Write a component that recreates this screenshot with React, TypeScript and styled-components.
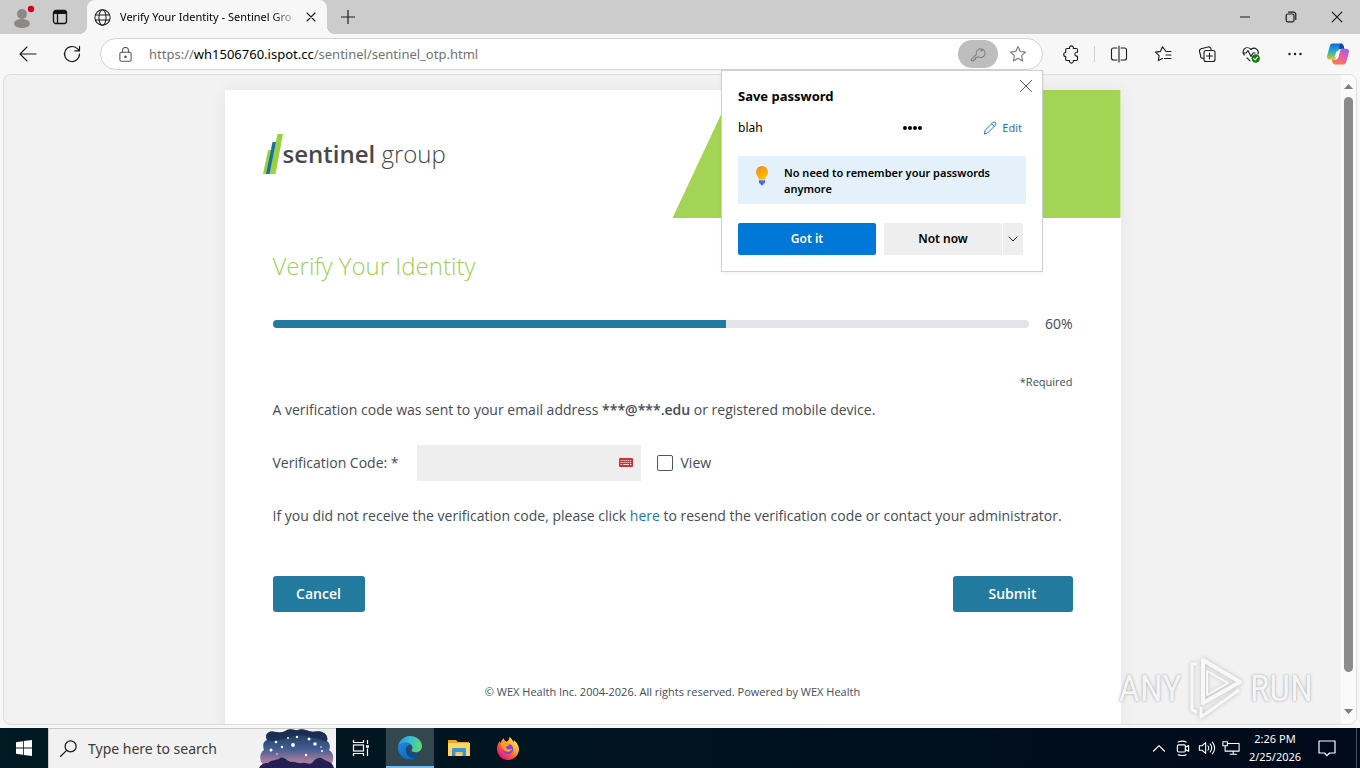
import React, { useState } from 'react';
import styled, { createGlobalStyle } from 'styled-components';

const ui = '"Noto Sans", "Open Sans", sans-serif';
const web = '"Open Sans", "Noto Sans", sans-serif';

const GlobalStyle = createGlobalStyle`
  *, *::before, *::after { box-sizing: border-box; }
  html, body, #root { height: 100%; }
  body { margin: 0; overflow: hidden; background: #f7f7f7; font-family: ${ui}; color: #000; }
  button, input { font: inherit; }
  button { border: 0; padding: 0; background: none; color: inherit; cursor: pointer; }
  p, h1, h2 { margin: 0; font-weight: 400; }
  svg { display: block; flex: none; }
`;

const Desktop = styled.div`
  display: flex;
  flex-direction: column;
  height: 100vh;
`;

/* ---------- browser chrome ---------- */

const TabStrip = styled.header`
  display: flex;
  height: 34px;
  background: #cccccc;
`;

const StripButton = styled.button<{ $width: number }>`
  display: flex;
  align-items: center;
  justify-content: center;
  width: ${(p) => p.$width}px;
  height: 34px;
`;

const Profile = styled(StripButton)`
  padding-left: 4px;
`;

const Tab = styled.div`
  position: relative;
  display: flex;
  align-items: center;
  width: 240px;
  margin-left: 9px;
  padding: 0 8px 0 7px;
  border-radius: 8px 8px 0 0;
  background: #f7f7f7;
  &::before, &::after {
    content: '';
    position: absolute;
    bottom: 0;
    width: 8px;
    height: 8px;
  }
  &::before { left: -8px; background: radial-gradient(circle at 0 0, transparent 8px, #f7f7f7 8px); }
  &::after { right: -8px; background: radial-gradient(circle at 100% 0, transparent 8px, #f7f7f7 8px); }
`;

const TabTitle = styled.span`
  flex: 1;
  min-width: 0;
  margin-left: 9px;
  overflow: hidden;
  white-space: nowrap;
  font-size: 11px;
  line-height: 20px;
  mask-image: linear-gradient(to right, #000 152px, transparent 180px);
`;

const TabClose = styled.button`
  display: flex;
  align-items: center;
  justify-content: center;
  width: 16px;
  height: 24px;
`;

const WindowControls = styled.div`
  display: flex;
  margin-left: auto;
`;

const Toolbar = styled.nav`
  display: flex;
  align-items: center;
  height: 40px;
  padding-left: 6px;
`;

const ToolButton = styled.button`
  display: flex;
  align-items: center;
  justify-content: center;
  width: 44px;
  height: 32px;
`;

const ToolDivider = styled.span`
  width: 1px;
  height: 16px;
  margin: 0 1px;
  background: #cfcfcf;
`;

const AddressBar = styled.div`
  position: relative;
  display: flex;
  flex: 1;
  align-items: center;
  height: 32px;
  margin: 0 6px;
  padding: 0 10px 0 17px;
  border: 1px solid #d2d2d2;
  border-radius: 16px;
  background: #fff;
`;

const Url = styled.a`
  flex: 1;
  margin-left: 16px;
  font-size: 13px;
  line-height: 20px;
  color: #727272;
  text-decoration: none;
  b { font-weight: 400; color: #000; }
`;

const AddressAction = styled.button<{ $active?: boolean }>`
  display: flex;
  align-items: center;
  justify-content: center;
  width: 40px;
  height: 28px;
  border-radius: 14px;
  background: ${(p) => (p.$active ? '#bebebe' : 'transparent')};
  &:last-of-type { width: 28px; margin-left: 6px; }
`;

/* ---------- save-password flyout ---------- */

const Flyout = styled.section`
  position: absolute;
  z-index: 5;
  top: 31px;
  right: -1px;
  width: 322px;
  padding: 15px 16px 16px;
  border: 1px solid #cfcfcf;
  background: #fff;
  box-shadow: 0 2px 4px rgba(0, 0, 0, 0.04);
  font-size: 12px;
  line-height: 16px;
`;

const FlyoutClose = styled.button`
  position: absolute;
  top: 7px;
  right: 8px;
  display: flex;
  align-items: center;
  justify-content: center;
  width: 16px;
  height: 16px;
`;

const FlyoutTitle = styled.h2`
  font-size: 13px;
  line-height: 20px;
  font-weight: 700;
`;

const Credentials = styled.div`
  display: grid;
  grid-template-columns: 165px 1fr auto;
  align-items: center;
  height: 20px;
  margin-top: 12px;
  padding-right: 4px;
`;

const Dots = styled.span`
  display: flex;
  gap: 1px;
  i { width: 4px; height: 4px; border-radius: 50%; background: #000; }
`;

const EditButton = styled.button`
  display: flex;
  align-items: center;
  gap: 5px;
  font-size: 11px;
  color: #1c76c4;
`;

const Tip = styled.div`
  display: flex;
  align-items: flex-start;
  gap: 14px;
  height: 48px;
  margin-top: 18px;
  padding: 9px 8px 0 16px;
  border-radius: 2px;
  background: #e4f1fb;
  font-size: 11px;
  font-weight: 600;
`;

const FlyoutActions = styled.div`
  display: flex;
  margin: 19px 0 0;
`;

const FlyoutButton = styled.button<{ $width: number; $primary?: boolean }>`
  display: flex;
  align-items: center;
  justify-content: center;
  width: ${(p) => p.$width}px;
  height: 32px;
  margin-right: ${(p) => (p.$primary ? 8 : 1)}px;
  border-radius: 2px;
  background: ${(p) => (p.$primary ? '#0078d7' : '#eeeeee')};
  color: ${(p) => (p.$primary ? '#fff' : '#000')};
  font-weight: 600;
`;

/* ---------- web page ---------- */

const Viewport = styled.div`
  position: relative;
  display: flex;
  flex: 1;
  min-height: 0;
  margin: 0 3px 3px;
  overflow: hidden;
  border: 1px solid #dedede;
  border-radius: 8px;
  background: #f2f2f2;
`;

const PageArea = styled.main`
  flex: 1;
  padding-top: 15px;
  overflow: hidden;
  font-family: ${web};
  font-size: 14px;
  line-height: 24px;
  color: #454b57;
  b { font-weight: 600; }
`;

const Card = styled.article`
  max-width: 896px;
  min-height: 700px;
  margin: 0 auto;
  background: #fff;
  box-shadow: 0 0 16px rgba(0, 0, 0, 0.06);
`;

const Masthead = styled.div`
  display: flex;
  justify-content: space-between;
  height: 128px;
  padding-left: 38px;
`;

const Slant = styled.div`
  width: 448px;
  background: #a4d455;
  clip-path: polygon(60px 0, 100% 0, 100% 100%, 0 100%);
`;

const Brand = styled.a`
  display: flex;
  height: 128px;
  align-items: center;
  color: #48484a;
  text-decoration: none;
  font-size: 24px;
  line-height: 32px;
  font-weight: 300;
`;

const Content = styled.form`
  display: flex;
  flex-direction: column;
  padding: 32px 48px;
`;

const Title = styled.h1`
  font-size: 24px;
  line-height: 32px;
  font-weight: 300;
  color: #a0cd57;
`;

const ProgressRow = styled.div`
  display: flex;
  align-items: center;
  gap: 16px;
  height: 20px;
  margin-top: 32px;
`;

const Track = styled.div`
  flex: 1;
  height: 8px;
  overflow: hidden;
  border-radius: 4px;
  background: #e3e3e8;
`;

const Fill = styled.div`
  height: 8px;
  background: #227a9e;
`;

const Small = styled.p<{ $center?: boolean }>`
  margin-top: ${(p) => (p.$center ? 72 : 40)}px;
  font-size: 11px;
  line-height: 16px;
  text-align: ${(p) => (p.$center ? 'center' : 'right')};
`;

const Lead = styled.p`
  margin-top: 8px;
`;

const Paragraph = styled.p`
  margin-top: 23px;
  a { color: #227a9e; text-decoration: none; }
`;

const Field = styled.div`
  display: flex;
  align-items: center;
  height: 36px;
  margin-top: 23px;
`;

const FieldLabel = styled.label`
  width: 144px;
`;

const CodeBox = styled.div`
  display: flex;
  align-items: center;
  width: 224px;
  height: 36px;
  margin-right: 16px;
  padding-right: 8px;
  background: #eeeeee;
`;

const CodeInput = styled.input`
  flex: 1;
  min-width: 0;
  height: 36px;
  padding: 0 12px;
  border: 0;
  outline: 0;
  background: transparent;
`;

const Check = styled.input`
  appearance: none;
  width: 16px;
  height: 16px;
  margin: 0 8px 0 0;
  border: 1px solid #4f5560;
  border-radius: 2px;
  background: #fff;
  &:checked { background: #227a9e; }
`;

const Actions = styled.div`
  display: flex;
  justify-content: space-between;
  margin-top: 48px;
`;

const ActionButton = styled.button<{ $width: number }>`
  width: ${(p) => p.$width}px;
  height: 36px;
  border-radius: 3px;
  background: #227a9e;
  color: #fff;
  font-weight: 600;
`;

const Scrollbar = styled.div`
  display: flex;
  flex-direction: column;
  align-items: center;
  justify-content: space-between;
  width: 15px;
  padding: 9px 0 10px;
  background: #fafafa;
`;

const Thumb = styled.div`
  flex: 1;
  width: 9px;
  margin: 8px 0 37px;
  border-radius: 5px;
  background: #8b8b8b;
`;

const Watermark = styled.div`
  position: absolute;
  right: 43px;
  bottom: 2px;
  display: flex;
  align-items: center;
  gap: 6px;
  height: 68px;
  font-family: "Roboto Condensed", "Open Sans Condensed", Roboto, sans-serif;
  font-size: 37px;
  color: #f5f5f5;
  text-shadow: 0 0 3px #b0b0b0, 0 0 1px #b0b0b0;
  svg { filter: drop-shadow(0 0 2px #bbbbbb); }
`;

/* ---------- taskbar ---------- */

const Taskbar = styled.footer`
  display: flex;
  align-items: center;
  height: 40px;
  background: linear-gradient(90deg, #001a24, #00131f 50%, #000a1a);
  color: #fff;
`;

const TaskButton = styled.button<{ $active?: boolean }>`
  display: flex;
  align-items: center;
  justify-content: center;
  width: 48px;
  height: 40px;
  background: ${(p) => (p.$active ? '#33474f' : 'transparent')};
  box-shadow: ${(p) => (p.$active ? 'inset 0 -2px #76b9ed' : 'none')};
`;

const PinnedApps = styled.div`
  display: flex;
  gap: 1px;
  padding-left: 1px;
`;

const SearchBox = styled.label`
  display: flex;
  align-items: center;
  width: 288px;
  height: 40px;
  padding: 0 1px 0 11px;
  border: 1px solid #c9c9c9;
  border-width: 1px 0 0 1px;
  background: #f1f1f1;
`;

const SearchInput = styled.input`
  flex: 1;
  min-width: 0;
  padding: 0;
  margin-left: 11px;
  border: 0;
  outline: 0;
  background: transparent;
  font-size: 14px;
  &::placeholder { color: #3b3b3b; opacity: 1; }
`;

const Tray = styled.div`
  display: flex;
  align-items: center;
  height: 40px;
  margin-left: auto;
`;

const TrayButton = styled.button`
  display: flex;
  align-items: center;
  justify-content: center;
  width: 24px;
  height: 40px;
`;

const Clock = styled.time`
  width: 64px;
  text-align: center;
  font-size: 11px;
  line-height: 18px;
`;

const Notifications = styled(TrayButton)`
  width: 40px;
`;

const ShowDesktop = styled.button`
  width: 4px;
  height: 40px;
  margin-left: 9px;
  border-left: 1px solid #4a5058;
`;

/* ---------- icons ---------- */

type IconProps = { size?: number; color?: string; width?: number; children: React.ReactNode };
const Icon = ({ size = 20, color = '#1b1b1b', width = 1.1, children }: IconProps) => (
  <svg width={size} height={size} viewBox="0 0 20 20" fill="none" stroke={color} strokeWidth={width} strokeLinecap="round" strokeLinejoin="round" aria-hidden="true">
    {children}
  </svg>
);

const Cross = ({ size, color, width }: { size: number; color?: string; width?: number }) => (
  <Icon size={size} color={color} width={width}><path d="M2 2 18 18M18 2 2 18" /></Icon>
);

const starPath = 'M10 2.6l2.2 4.9 5.3.6-3.9 3.600 1 5.200L10 14.300l-4.600 2.600 1-5.200L2.500 8.100l5.300-.6z';

const ProfileIcon = () => (
  <svg width="24" height="26" viewBox="0 0 24 26">
    <circle cx="11" cy="10" r="5" fill="#8b8885" />
    <ellipse cx="11" cy="19.500" rx="8" ry="4.500" fill="#8b8885" />
    <circle cx="20" cy="5" r="3.200" fill="#d0021b" />
  </svg>
);

const CopilotIcon = () => (
  <svg width="24" height="24" viewBox="0 0 24 24">
    <defs>
      <linearGradient id="cpA" x1="0" y1="0" x2="0" y2="1">
        <stop offset="0" stopColor="#1468d8" /><stop offset=".45" stopColor="#1fa8d8" />
        <stop offset=".7" stopColor="#63c46e" /><stop offset="1" stopColor="#f5c42c" />
      </linearGradient>
      <linearGradient id="cpB" x1=".8" y1="0" x2=".2" y2="1">
        <stop offset="0" stopColor="#a45bf0" /><stop offset=".5" stopColor="#ec5f9c" /><stop offset="1" stopColor="#f9803c" />
      </linearGradient>
    </defs>
    <path d="M6.500 1.500h8.300c1.500 0 2.300 1 2.800 2.500l.7 2.700h-3.500c-1.800 0-2.600 1-3.100 2.700L10 15.500c-.4 1.400-1.200 2.300-2.700 2.300H4C1.500 17.800.5 15.800 1.200 13.500L3.800 4C4.300 2.400 5.100 1.500 6.500 1.500z" fill="url(#cpA)" />
    <path d="M17.500 22.500H9.200c-1.500 0-2.300-1-2.800-2.500l-.5-2.200h3.300c1.800 0 2.600-1 3.100-2.700L14 9c.4-1.400 1.200-2.300 2.700-2.300H20c2.500 0 3.500 2 2.800 4.300L20.200 20c-.5 1.600-1.300 2.500-2.700 2.500z" fill="url(#cpB)" />
    <path d="M14.800 1.500c1.500 0 2.300 1 2.800 2.500l.7 2.700h-3.500c-1 0-1.700.3-2.200.9l1.200-4.100c.3-1.200.5-2 1-2z" fill="#183fa8" />
    <path d="M10.300 9.500h3.500l-1.500 5.700h-3.700z" fill="#fff" />
  </svg>
);

const BulbIcon = () => (
  <svg width="16" height="22" viewBox="0 0 16 22">
    <defs><linearGradient id="bulb" x1="0" y1="0" x2=".6" y2="1"><stop offset="0" stopColor="#f58220" /><stop offset="1" stopColor="#ffc400" /></linearGradient></defs>
    <path d="M8 1a6 6 0 0 0-6 6.200c0 2.300 1.500 3.700 2.300 5.300.3.700.4 1.500.4 2h6.600c0-.5.100-1.300.4-2 .8-1.600 2.300-3 2.300-5.300A6 6 0 0 0 8 1z" fill="url(#bulb)" />
    <path d="M4.900 15.300h6.200v1.800c0 .8-.5 1.400-1.300 1.600L8.700 20.300H7.300L6.200 18.700c-.8-.2-1.300-.8-1.300-1.600z" fill="#4f6bed" />
  </svg>
);

const BrandMark = () => (
  <svg width="20" height="40" viewBox="0 0 20 40">
    <path d="M14.500 0H20L12.500 40H6z" fill="#97d33f" />
    <path d="M5 16h5L5 40H0z" fill="#97d33f" />
    <path d="M9.500 8H13L6.500 40H3z" fill="#1f6fa0" />
  </svg>
);

const KeyboardIcon = () => (
  <svg width="14" height="10" viewBox="0 0 14 10">
    <rect width="14" height="9" rx="1" fill="#cf2f38" />
    <path d="M1.500 2.500h11M1.500 4.500h11" stroke="#f6d4d6" strokeWidth="1" strokeDasharray="1.200 .7" />
    <path d="M1.500 6.500h1.500M4 6.500h6M11 6.500h1.500" stroke="#f6d4d6" />
  </svg>
);

const PlayMark = () => (
  <svg width="56" height="64" viewBox="0 0 56 64" fill="none" strokeLinejoin="round" stroke="#f8f8f8" strokeWidth="4">
    <path d="M15 4v43L52 26z" />
    <path d="M9 8H4v46l5 2M13 51v10l38-27" strokeWidth="3" />
    <path d="M19 15v24l21-12z" strokeWidth="2" />
  </svg>
);

const NightSky = () => (
  <svg width="76" height="39" viewBox="0 0 76 39">
    <defs>
      <linearGradient id="sky" x1="0" y1="0" x2="0" y2="1">
        <stop offset="0" stopColor="#1c3157" /><stop offset=".5" stopColor="#3f5d90" /><stop offset=".8" stopColor="#a07a9c" /><stop offset="1" stopColor="#c98a98" />
      </linearGradient>
    </defs>
    <path d="M3 34C0 30 1 23 5 21 3 15 5 12 8 11 5 5 10 1 17 3c5 1 8 0 11-2 5-2 8 1 11 0 4-2 8 0 11 1 5 2 8-1 13 1 5 2 6 6 5 9 4 3 3 7 2 9 5 3 5 9 3 13l-4 5H6z" fill="url(#sky)" />
    <path d="M8 11C5 5 10 1 17 3c5 1 8 0 11-2 5-2 8 1 11 0 4-2 8 0 11 1 5 2 8-1 13 1 5 2 6 6 5 9-4 1-7-3-12-3-7 0-9-3-16-3s-9 4-15 4-9 4-16 1z" fill="#182a4c" opacity=".75" />
    <path d="M0 39c2-4 5-5 9-5 4-4 9-2 12-5 4-2 7 3 11 4 4-1 7 2 11 1 4-1 7 2 10 0 3-4 7-7 11-4 4 3 9 2 11 9z" fill="#241f52" />
    <g fill="#fff">
      <circle cx="17" cy="13" r="1.300" /><circle cx="34" cy="16" r="1.900" /><circle cx="38" cy="8" r="1.200" /><circle cx="50" cy="10" r="1.500" />
      <circle cx="56" cy="15" r="1.800" /><circle cx="23" cy="18" r="1.200" /><circle cx="12" cy="21" r="1.500" /><circle cx="63" cy="22" r="1" />
      <circle cx="47" cy="26" r="1.200" /><circle cx="29" cy="9" r=".9" /><circle cx="18" cy="25" r=".8" /><circle cx="62" cy="18" r=".8" />
    </g>
  </svg>
);

const EdgeIcon = () => (
  <svg width="26" height="26" viewBox="0 0 26 26">
    <defs>
      <linearGradient id="egTop" x1="0" y1=".4" x2="1" y2=".5"><stop offset="0" stopColor="#2596e0" /><stop offset=".5" stopColor="#35c1d6" /><stop offset="1" stopColor="#5fdb67" /></linearGradient>
      <linearGradient id="egLow" x1="0" y1="0" x2="1" y2="1"><stop offset="0" stopColor="#1b8de0" /><stop offset="1" stopColor="#0f5bb0" /></linearGradient>
    </defs>
    <path d="M1 13C1 6 6.500 1 13 1s12 4.500 12 10c0 4-3 6.300-6.300 6.300-2.700 0-4.200-.9-4.200-1.700 0-.6 1-1 1-2.900C15.500 10 12.500 7.800 9 7.800 4.500 7.800 1.600 10.300 1 13z" fill="url(#egTop)" />
    <path d="M1 13c.6-2.700 3.500-5.200 8-5.200 2 0 3.700.6 4.900 1.700-3.200.3-5 2.600-5 5.400 0 5 4.500 8.900 9.700 8.300A12 12 0 0 1 1 13z" fill="url(#egLow)" />
    <path d="M10.600 11.200c-1.200 1-1.700 2.300-1.700 3.700 0 5 4.900 9 10 8 2-1 3.500-2.500 4.400-4.100.3-.6-.2-1-.8-.7-5.500 2.800-11.900-.6-11.900-6.900z" fill="#114a8b" />
  </svg>
);

const FolderIcon = () => (
  <svg width="24" height="22" viewBox="0 0 24 22">
    <path d="M1 3h8l2 2h11v3H1z" fill="#e8a921" />
    <path d="M1 6h22v13H1z" fill="#fcd768" />
    <path d="M5 19v-6.500c0-1 .6-1.500 1.500-1.500h11c.9 0 1.500.5 1.500 1.500V19h-3.500v-4h-7v4z" fill="#3d93d3" />
    <path d="M9 15h6v2H9z" fill="#e8c860" />
  </svg>
);

const FirefoxIcon = () => (
  <svg width="24" height="24" viewBox="0 0 24 24">
    <defs>
      <linearGradient id="ffx" x1=".9" y1=".1" x2=".2" y2=".9"><stop offset="0" stopColor="#fff04a" /><stop offset=".35" stopColor="#ffb02e" /><stop offset=".65" stopColor="#ff5a3c" /><stop offset="1" stopColor="#e31587" /></linearGradient>
    </defs>
    <path d="M13.500.8c2 1.700 3.200 3.500 4 5.500.4-.5.300-1.300 0-2.300 3 2 5.500 5.500 5.500 9.300A11 11 0 0 1 1 12.800C1 9.500 2.300 6.700 4 5c0 1 .2 1.700.5 2.200C5.300 4.800 6.400 3.300 7.700 2.300c.2 1.500 1.300 2.600 2.800 3.500C12.500 5 13.600 3 13.500.8z" fill="url(#ffx)" />
    <circle cx="12" cy="13" r="5.200" fill="#7a45e0" />
    <path d="M4.500 7.200c2-1 4-.7 5.500.3 1 .2 2.500.2 3.500.8-.4 1.400-1.700 1.700-2.800 2.100-.9.500-.7 1.800.3 2.700 1.700.8 3.400-.5 5.300.2-1.200 1.900-3.400 3-5.500 2.400C7 14.700 5.500 11 4.500 7.200z" fill="#ff9a2e" />
  </svg>
);

export default function App() {
  const [code, setCode] = useState('');
  const [view, setView] = useState(false);
  const progress = 60;

  return (
    <Desktop>
      <GlobalStyle />
      <TabStrip>
        <Profile $width={42} aria-label="Profile"><ProfileIcon /></Profile>
        <StripButton $width={36} aria-label="Tab actions">
          <svg width="16" height="16" viewBox="0 0 16 16" fill="none" stroke="#111" strokeWidth="1.300">
            <rect x="1.500" y="1.500" width="13" height="13" rx="2.500" /><path d="M2 3.500h12" strokeWidth="3" /><path d="M5.500 5v9" />
          </svg>
        </StripButton>
        <Tab>
          <Icon size={17} width={1.200}><circle cx="10" cy="10" r="9" /><ellipse cx="10" cy="10" rx="4.200" ry="9" /><path d="M1.700 7h16.600M1.700 13h16.600" /></Icon>
          <TabTitle>Verify Your Identity - Sentinel Gro</TabTitle>
          <TabClose aria-label="Close tab"><Cross size={10} width={2.200} /></TabClose>
        </Tab>
        <StripButton $width={42} aria-label="New tab"><Icon size={14} width={1.700}><path d="M10 0v20M0 10h20" /></Icon></StripButton>
        <WindowControls>
          <StripButton $width={46} aria-label="Minimize"><Icon size={10} width={2}><path d="M0 10h20" /></Icon></StripButton>
          <StripButton $width={46} aria-label="Restore"><Icon size={12} width={2}><rect x="2" y="5" width="13" height="13" rx="2.500" /><path d="M6 2h8.500A3.500 3.500 0 0 1 18 5.500V14" /></Icon></StripButton>
          <StripButton $width={46} aria-label="Close"><Cross size={12} width={2} /></StripButton>
        </WindowControls>
      </TabStrip>

      <Toolbar>
        <ToolButton aria-label="Back"><Icon><path d="M18 10H2.500M9 3 2 10l7 7" /></Icon></ToolButton>
        <ToolButton aria-label="Refresh"><Icon width={1.200}><path d="M17.500 10a7.500 7.500 0 1 1-2.200-5.300l2 2M17.500 2.300v4.600h-4.600" /></Icon></ToolButton>
        <AddressBar>
          <Icon size={15} color="#555" width={1.400}><rect x="2.500" y="7" width="15" height="12" rx="2" /><path d="M6 7V4.500a4 4 0 0 1 8 0V7" /><circle cx="10" cy="13" r="1" fill="#555" /></Icon>
          <Url href="#url">https://<b>wh1506760.ispot.cc</b>/sentinel/sentinel_otp.html</Url>
          <AddressAction $active aria-label="Save password">
            <Icon size={16} color="#808080" width={1.300}><path d="M8 10.500 1.700 16.800v1.700h3.200v-2h2v-2h1.700l1.200-1.300a5.500 5.500 0 1 0-1.800-2.700z" /><circle cx="14.500" cy="5.500" r=".8" /></Icon>
          </AddressAction>
          <AddressAction aria-label="Add to favorites"><Icon color="#777"><path d={starPath} /></Icon></AddressAction>

          <Flyout aria-label="Save password">
            <FlyoutClose aria-label="Dismiss"><Cross size={14} color="#555" width={1.400} /></FlyoutClose>
            <FlyoutTitle>Save password</FlyoutTitle>
            <Credentials>
              <span>blah</span>
              <Dots aria-label="Hidden password"><i /><i /><i /><i /></Dots>
              <EditButton>
                <Icon size={14} color="#1c76c4" width={1.400}><path d="M2 18l1.300-5L14 2.300a2.500 2.500 0 0 1 3.700 3.700L7 16.700zM12.300 4l3.700 3.700" /></Icon>
                Edit
              </EditButton>
            </Credentials>
            <Tip><BulbIcon /><span>No need to remember your passwords anymore</span></Tip>
            <FlyoutActions>
              <FlyoutButton $width={138} $primary>Got it</FlyoutButton>
              <FlyoutButton $width={118}>Not now</FlyoutButton>
              <FlyoutButton $width={20} aria-label="More choices"><Icon size={10} width={2}><path d="M2 6l8 8 8-8" /></Icon></FlyoutButton>
            </FlyoutActions>
          </Flyout>
        </AddressBar>
        <ToolButton aria-label="Extensions">
          <Icon><path d="M6 4.500h2.500a2 2 0 1 1 3.800 0h2.900a1.300 1.300 0 0 1 1.300 1.300V8.300a2 2 0 1 0 0 3.800v3.100a1.300 1.300 0 0 1-1.300 1.300h-2.900a2 2 0 1 1-3.800 0H6a1.300 1.300 0 0 1-1.300-1.300v-2.700a2 2 0 1 1 0-4V5.800A1.300 1.300 0 0 1 6 4.500z" /></Icon>
        </ToolButton>
        <ToolDivider />
        <ToolButton aria-label="Split screen"><Icon><path d="M9 4H5.500A2 2 0 0 0 3.500 6v8a2 2 0 0 0 2 2H9M13 4h3.500a2 2 0 0 1 2 2v8a2 2 0 0 1-2 2H13M11 2v16" /></Icon></ToolButton>
        <ToolButton aria-label="Favorites"><Icon><path d="M19 7.500h-5L10.500 2.800 8.400 7.400l-4.900.7 3.600 3.500-.8 5 4.200-2.100M14 11h5M12.500 14.500h6.500" /></Icon></ToolButton>
        <ToolButton aria-label="Collections"><Icon><rect x="8" y="6.500" width="11" height="11" rx="2" /><path d="M13.500 9v6M10.500 12h6M7.500 14.500l-1.500-.4a2 2 0 0 1-1.400-2.500L3.500 7.500A2.300 2.300 0 0 1 5.200 4.800L12 3a2.300 2.300 0 0 1 2.900 1.700l.2 1" /></Icon></ToolButton>
        <ToolButton aria-label="Browser essentials">
          <Icon><path d="M4.300 11A4.300 4.300 0 0 1 10.500 5l.5.500.5-.5a4.300 4.300 0 0 1 6.500 5M7 13.800l3 3M3 9h3l2-2.500 3 6L13 9h2" /><circle cx="15.700" cy="14.500" r="4.200" fill="#107c10" stroke="none" /><path d="M13.800 14.600l1.300 1.300 2.500-2.700" stroke="#fff" /></Icon>
        </ToolButton>
        <ToolButton aria-label="Settings and more"><Icon><g fill="#1b1b1b" stroke="none"><circle cx="5.500" cy="10" r="1.200" /><circle cx="11" cy="10" r="1.200" /><circle cx="16.500" cy="10" r="1.200" /></g></Icon></ToolButton>
        <ToolButton aria-label="Copilot"><CopilotIcon /></ToolButton>
      </Toolbar>

      <Viewport>
        <PageArea>
          <Card>
            <Masthead>
              <Brand href="#home"><BrandMark /><span><b>sentinel</b> group</span></Brand>
              <Slant />
            </Masthead>
            <Content onSubmit={(e) => e.preventDefault()}>
              <Title>Verify Your Identity</Title>
              <ProgressRow>
                <Track role="progressbar" aria-valuenow={progress}><Fill style={{ width: `${progress}%` }} /></Track>
                <span>{progress}%</span>
              </ProgressRow>
              <Small>*Required</Small>
              <Lead>A verification code was sent to your email address <b>***@***.edu</b> or registered mobile device.</Lead>
              <Field>
                <FieldLabel htmlFor="code">Verification Code: *</FieldLabel>
                <CodeBox>
                  <CodeInput id="code" type={view ? 'text' : 'password'} value={code} onChange={(e) => setCode(e.target.value)} />
                  <KeyboardIcon />
                </CodeBox>
                <Check id="view" type="checkbox" checked={view} onChange={(e) => setView(e.target.checked)} />
                <label htmlFor="view">View</label>
              </Field>
              <Paragraph>If you did not receive the verification code, please click <a href="#resend">here</a> to resend the verification code or contact your administrator.</Paragraph>
              <Actions>
                <ActionButton type="button" $width={92}>Cancel</ActionButton>
                <ActionButton type="submit" $width={120}>Submit</ActionButton>
              </Actions>
              <Small $center>© WEX Health Inc. 2004-2026. All rights reserved. Powered by WEX Health</Small>
            </Content>
          </Card>
        </PageArea>
        <Scrollbar>
          <svg width="9" height="5" viewBox="0 0 9 5"><path d="M4.500 0 9 5H0z" fill="#7d7d7d" /></svg>
          <Thumb />
          <svg width="9" height="5" viewBox="0 0 9 5"><path d="M4.500 5 0 0h9z" fill="#7d7d7d" /></svg>
        </Scrollbar>
        <Watermark><span>ANY</span><PlayMark /><span>RUN</span></Watermark>
      </Viewport>

      <Taskbar>
        <TaskButton aria-label="Start">
          <svg width="16" height="16" viewBox="0 0 16 16" fill="#fff"><path d="M0 2.200 7 1.200v6.400H0zM7.800 1.100 16 0v7.600H7.800zM0 8.400h7v6.400l-7-1zM7.800 8.400H16V16l-8.200-1.100z" /></svg>
        </TaskButton>
        <SearchBox>
          <Icon size={17} width={1.500}><circle cx="12.500" cy="7.500" r="6.500" /><path d="M7.800 12.200.8 19.200" /></Icon>
          <SearchInput placeholder="Type here to search" aria-label="Type here to search" />
          <NightSky />
        </SearchBox>
        <PinnedApps>
          <TaskButton aria-label="Task view">
            <svg width="18" height="18" viewBox="0 0 18 18" fill="none" stroke="#fff" strokeWidth="1.200"><path d="M1.500 1v2.500h10V1M1.500 17v-2.500h10V17M15.500 1v4M15.500 9.500V17" /><rect x="1.500" y="6" width="10" height="6" /><path d="M14 7.500h3" strokeWidth="2.500" /></svg>
          </TaskButton>
          <TaskButton $active aria-label="Microsoft Edge"><EdgeIcon /></TaskButton>
          <TaskButton aria-label="File Explorer"><FolderIcon /></TaskButton>
          <TaskButton aria-label="Firefox"><FirefoxIcon /></TaskButton>
        </PinnedApps>
        <Tray>
          <TrayButton aria-label="Show hidden icons"><Icon size={12} color="#fff" width={2}><path d="M1 15l9-9 9 9" /></Icon></TrayButton>
          <TrayButton aria-label="Meet now"><Icon size={16} color="#fff" width={1.500}><rect x="3" y="6" width="10" height="9" rx="1.500" /><path d="M13 9l4-2v7l-4-2M4 2.500q5-2 10 0M4 18.500q5 2 10 0" /></Icon></TrayButton>
          <TrayButton aria-label="Volume"><Icon size={18} color="#fff" width={1.200}><path d="M1.500 7.500h3l4-3.500v12l-4-3.500h-3zM11 7.500q2 2.500 0 5M13.500 5.500q3.500 4.500 0 9M16 3.500q5 6.500 0 13" /></Icon></TrayButton>
          <TrayButton aria-label="Network"><Icon size={18} color="#fff" width={1.200}><path d="M6.500 5H19v8.500H6.500M12.500 13.500V17M9 17h7M1 3h5v4.500H1zM3.500 8v5.500h3" /></Icon></TrayButton>
          <Clock>2:26 PM<br />2/25/2026</Clock>
          <Notifications aria-label="Notifications"><Icon size={20} color="#fff" width={1.200}><path d="M2 3h16v12h-5.500L10 17.700 7.500 15H2z" /></Icon></Notifications>
          <ShowDesktop aria-label="Show desktop" />
        </Tray>
      </Taskbar>
    </Desktop>
  );
}
